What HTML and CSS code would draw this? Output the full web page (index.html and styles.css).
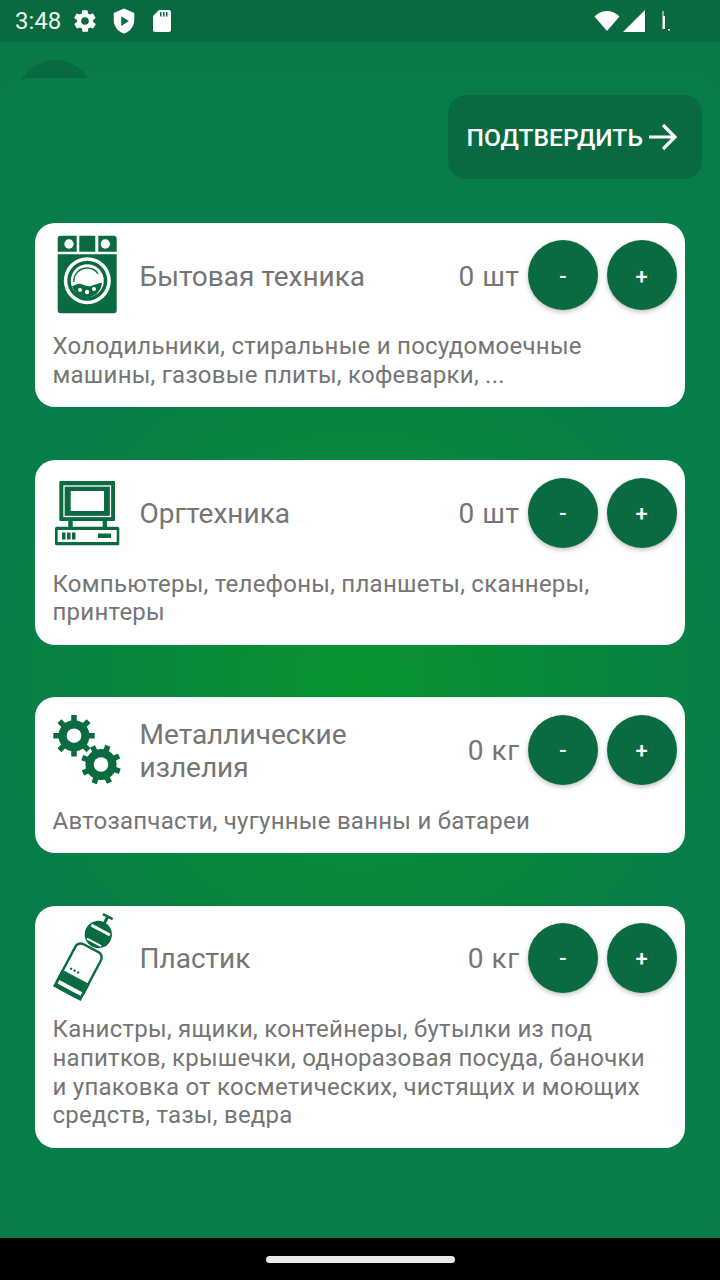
FILE: index.html
```html
<!DOCTYPE html>
<html lang="ru">
<head>
<meta charset="utf-8">
<title>Подтвердить</title>
<link rel="stylesheet" href="styles.css">
</head>
<body>
<div class="screen">
  <header class="status">
    <span class="time">3:48</span>
    <svg class="si gear" viewBox="0 0 24 24"><path fill="#fff" fill-rule="evenodd" d="M19.4 13c.1-.3.1-.7.1-1s0-.7-.1-1l2.100-1.600c.2-.2.2-.4.1-.6l-2-3.500c-.1-.2-.4-.3-.6-.2l-2.500 1c-.5-.4-1.100-.7-1.700-1l-.4-2.600c0-.3-.2-.5-.5-.5h-4c-.3 0-.5.2-.5.400l-.4 2.700c-.6.2-1.200.6-1.700 1l-2.500-1c-.2-.1-.5 0-.6.2l-2 3.500c-.1.200-.1.400.1.600L4.600 11c-.1.300-.1.700-.1 1s0 .7.100 1l-2.100 1.600c-.2.200-.2.400-.1.600l2 3.500c.1.200.4.300.6.200l2.500-1c.5.400 1.100.7 1.700 1l.4 2.600c0 .3.200.5.500.5h4c.3 0 .5-.2.500-.4l.4-2.700c.6-.2 1.200-.6 1.700-1l2.500 1c.2.100.5 0 .6-.2l2-3.500c.1-.2.1-.4-.1-.6zM12 15.500a3.500 3.500 0 1 1 0-7 3.500 3.500 0 0 1 0 7z"/></svg>
    <svg class="si shield" viewBox="0 0 24 24"><path fill="#fff" fill-rule="evenodd" d="M12 .5 2.500 4.500v6.500c0 5.800 4 10.900 9.500 12.500 5.500-1.600 9.500-6.700 9.500-12.500V4.500zM9.500 7.500l7 4.500-7 4.500z"/></svg>
    <svg class="si sd" viewBox="0 0 18 22"><path fill="#fff" fill-rule="evenodd" d="M16 0H6L0 6v14c0 1.100.9 2 2 2h14c1.100 0 2-.9 2-2V2c0-1.100-.9-2-2-2zM8.500 6.500H7V2h1.500zm3 0H10V2h1.500zm3 0H13V2h1.500z"/></svg>
    <span class="spacer"></span>
    <svg class="si wifi" viewBox="0 0 26 22"><path fill="#fff" d="M13 21 .5 6.500C4 3 8.300 1 13 1s9 2 12.500 5.500z"/></svg>
    <svg class="si signal" viewBox="0 0 22 22"><path fill="#fff" d="M22 0v22H0z"/></svg>
    <svg class="si batt" viewBox="0 0 10 22"><path fill="#fff" d="M1.500 1h1v5h-1zM1.500 6h2.500v13H1.500zM7 19h2v1.500H7z"/></svg>
  </header>

  <div class="backdrop">
    <div class="avatar"></div>
    <main class="sheet">
      <div class="actions">
        <button class="confirm">ПОДТВЕРДИТЬ
          <svg class="arrow" viewBox="0 0 28 28"><path fill="none" stroke="#fff" stroke-width="3.200" d="M0 14h26M14 2 26 14 14 26"/></svg>
        </button>
      </div>

      <section class="card">
        <div class="card-head">
          <svg class="icon" viewBox="0 0 70 90">
            <path class="g" d="M7.700 5.700H23.700V21.700H4.700V8.700q0-3 3-3zM26.300 5.700H42.300V21.700H26.300zM45.300 5.700H60.700q3 0 3 3V21.700H45.300zM4.700 24.300H63.700V80.300q0 3-3 3H7.700q-3 0-3-3z"/>
            <circle cx="16" cy="14" r="4.700" fill="#fff"/><circle cx="52.300" cy="14" r="4.700" fill="#fff"/>
            <circle cx="34.300" cy="50.700" r="23.500" fill="#fff"/><circle cx="34.300" cy="50.700" r="20" class="g"/><circle cx="34.300" cy="50.700" r="16.500" fill="#fff"/>
            <path class="g" d="M19 56c4 0 5-3 9-2s6 3 10 2 7-3 11-3c-1 8-7 14.500-15 14.500-7 0-13-5-15-11.500z"/>
            <path fill="none" stroke="#0a6b40" stroke-width="1.300" d="M21 52c-1-8 6-14 13-14 5 0 9 2 11 6"/>
            <circle cx="27" cy="60" r="2" fill="#fff"/><circle cx="34" cy="62" r="2.200" fill="#fff"/><circle cx="41" cy="59" r="2" fill="#fff"/>
          </svg>
          <h2 class="title">Бытовая техника</h2>
          <span class="qty">0 шт</span>
          <button class="round">-</button>
          <button class="round">+</button>
        </div>
        <p class="desc">Холодильники, стиральные и посудомоечные машины, газовые плиты, кофеварки, ...</p>
      </section>

      <section class="card">
        <div class="card-head">
          <svg class="icon" viewBox="0 0 70 90">
            <rect x="6.300" y="13" width="55.700" height="40" rx="1" class="g"/>
            <rect x="11" y="18" width="46.500" height="30.500" fill="none" stroke="#fff" stroke-width="1.300"/>
            <rect x="17.700" y="23" width="33.300" height="20" fill="#fff"/>
            <path class="g" d="M15.300 53h4.400v6h-4.400zM49.700 53h4.400v6h-4.400z"/>
            <rect x="2" y="58.700" width="64.300" height="18.600" rx="1.500" class="g"/>
            <rect x="4.700" y="62" width="59" height="12" fill="#fff"/>
            <path class="g" d="M9 64.500h3.500v7H9zM14 64.500h3.500v7H14zM19 64.500h3.500v7H19zM45 65.500h13v4.500H45z"/>
          </svg>
          <h2 class="title">Оргтехника</h2>
          <span class="qty">0 шт</span>
          <button class="round">-</button>
          <button class="round">+</button>
        </div>
        <p class="desc">Компьютеры, телефоны, планшеты, сканнеры, принтеры</p>
      </section>

      <section class="card">
        <div class="card-head">
          <svg class="icon" viewBox="0 0 70 90">
            <g class="g">
              <circle cx="21" cy="30.700" r="15.500"/>
              <path stroke="#0a6b40" stroke-width="5.500" d="M21 10v41.400M.3 30.700h41.400M6.400 16.100l29.200 29.200M35.600 16.100 6.400 45.300"/>
              <g transform="rotate(20 48 59.500)">
                <circle cx="48" cy="59.500" r="15.500"/>
                <path stroke="#0a6b40" stroke-width="5.500" d="M48 39.500v40M28 59.500h40M33.900 45.400l28.200 28.200M62.100 45.400 33.900 73.600"/>
              </g>
            </g>
            <circle cx="21" cy="30.700" r="7.300" fill="#fff"/><circle cx="48" cy="59.500" r="7.300" fill="#fff"/>
          </svg>
          <h2 class="title">Металлические излелия</h2>
          <span class="qty">0 кг</span>
          <button class="round">-</button>
          <button class="round">+</button>
        </div>
        <p class="desc">Автозапчасти, чугунные ванны и батареи</p>
      </section>

      <section class="card">
        <div class="card-head">
          <svg class="icon" viewBox="0 0 70 90">
            <g transform="translate(45.300 21.500) rotate(28)">
              <path class="g" d="M-5.500-21.500H5.500V-19H1.500V-12h-3v-7h-4z"/>
              <circle r="13.600" class="g"/>
              <path fill="#fff" d="M-10.500-6.500h21v3h-21zM-8 8h16v1.800H-8z"/>
              <rect x="-14.500" y="15.500" width="29" height="50" rx="6" fill="none" stroke="#0a6b40" stroke-width="2.400"/>
              <path class="g" d="M-15.700 48h31.400v19h-31.400z"/>
              <path fill="#fff" d="M-13 58.500h26v4h-26z"/>
              <circle cx="-8" cy="43" r="1.200" class="g"/><circle cx="-4" cy="43" r="1.200" class="g"/><circle cx="0" cy="43" r="1.200" class="g"/>
            </g>
          </svg>
          <h2 class="title">Пластик</h2>
          <span class="qty">0 кг</span>
          <button class="round">-</button>
          <button class="round">+</button>
        </div>
        <p class="desc">Канистры, ящики, контейнеры, бутылки из под напитков, крышечки, одноразовая посуда, баночки и упаковка от косметических, чистящих и моющих средств, тазы, ведра</p>
      </section>
    </main>
  </div>

  <footer class="nav"><span class="home"></span></footer>
</div>
</body>
</html>
```

FILE: styles.css
```css
* { box-sizing: border-box; }
html, body { margin: 0; padding: 0; }
body { font-family: Roboto, "Noto Sans", sans-serif; background: #000; }
.screen { width: 720px; height: 1280px; display: flex; flex-direction: column; overflow: hidden; }

.status { height: 42px; flex: none; background: #0a6a3f; display: flex; align-items: center; padding: 0 0 0 15px; color: #fff; }
.time { font-size: 24px; color: #e8f3ed; width: 57px; }
.si { display: block; flex: none; }
.gear { width: 26px; height: 26px; }
.shield { width: 26px; height: 26px; margin-left: 13px; }
.sd { width: 18px; height: 22px; margin-left: 16px; }
.spacer { flex: 1; }
.wifi { width: 26px; height: 22px; margin-right: 3px; }
.signal { width: 22px; height: 22px; margin-right: 16px; }
.batt { width: 10px; height: 22px; margin-right: 49px; }

.backdrop { position: relative; flex: 1; background: #087b49; overflow: hidden; }
.avatar { position: absolute; left: 16px; top: 18px; width: 78px; height: 78px; border-radius: 50%; background: #0a6a3f; }
.sheet { position: absolute; inset: 36px 0 0 0; border-radius: 32px; background: radial-gradient(circle 375px at 360px 604px, #09942f 0%, #078a39 45%, #077d48 100%, #077d49 100%); padding: 17px 35px 0; display: flex; flex-direction: column; gap: 52.75px; }

.actions { display: flex; justify-content: flex-end; height: 84px; margin-bottom: -8.75px; margin-right: -17px; }
.confirm { width: 254px; height: 84px; border: 0; border-radius: 18px; background: #0a6a3f; color: #fff; font: 500 24.6px Roboto, sans-serif; display: flex; align-items: center; padding: 0 0 0 18.5px; gap: 6px; }
.arrow { width: 28px; height: 28px; flex: none; }

.card { background: #fff; border-radius: 20px; padding: 17.4px 8.5px 17.4px 17.5px; }
.card-head { display: flex; align-items: center; height: 70px; }
.icon { width: 70px; height: 90px; flex: none; margin: -10px 17px -10px 0; }
.g { fill: #0a6b40; }
.title { flex: 1; margin: 0; padding: 2px 30px 0 0; font: 400 28px/33px Roboto, sans-serif; color: #757575; }
.qty { font-size: 28px; line-height: 33px; padding-top: 2px; letter-spacing: .6px; color: #757575; margin-right: 8.5px; white-space: nowrap; }
.round { width: 70px; height: 70px; flex: none; border: 0; border-radius: 50%; background: #0a6b40; color: #fff; font: 500 22px Roboto, sans-serif; box-shadow: 0 2px 5px rgba(0,0,0,.25); padding: 2px 0 0; }
.round + .round { margin-left: 8.4px; }
.desc { margin: 22px 0 0; font-size: 24px; letter-spacing: .25px; line-height: 28.8px; color: #757575; padding-right: 27px; }

.nav { height: 42px; flex: none; background: #000; display: flex; align-items: flex-end; justify-content: center; padding-bottom: 17px; }
.home { width: 189px; height: 7px; border-radius: 4px; background: #e8e8e8; }
```
